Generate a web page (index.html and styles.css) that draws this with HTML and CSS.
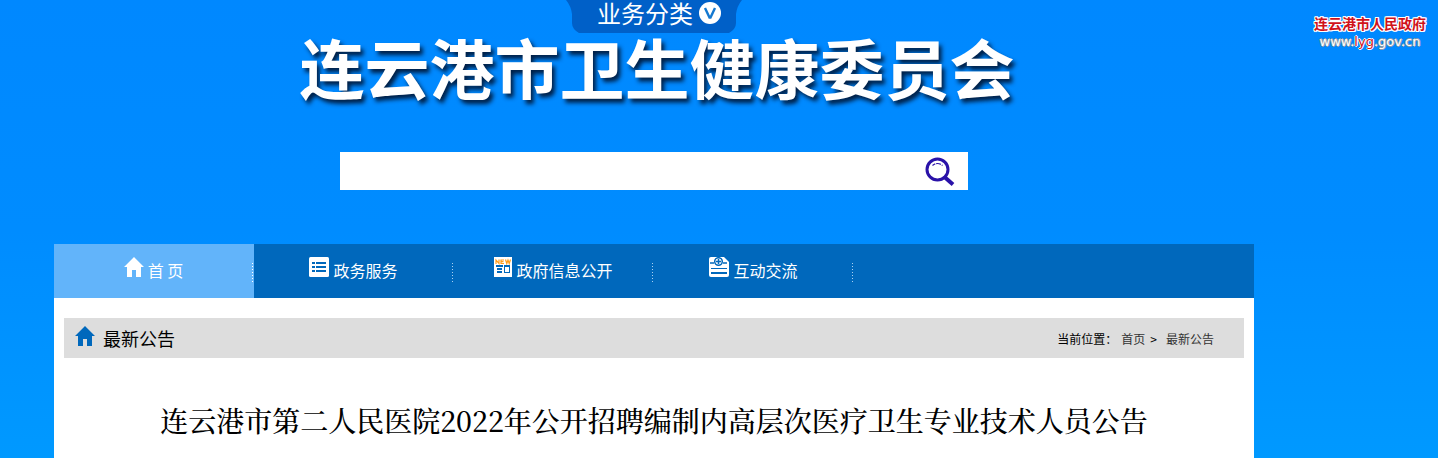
FILE: index.html
```html
<!DOCTYPE html>
<html lang="zh-CN">
<head>
<meta charset="utf-8">
<title>连云港市卫生健康委员会</title>
<link rel="stylesheet" href="styles.css">
</head>
<body>
<div class="page">
  <div class="main">
    <header class="header">
      <button class="category" type="button">
        <svg class="category-shape" viewBox="0 0 176 33" preserveAspectRatio="none" aria-hidden="true"><path d="M0 0H176Q171 6 170 14V23Q170 29 163 33H13Q6 29 6 23V14Q5 6 0 0Z" fill="#0060c8"/></svg>
        <span>业务分类</span>
        <svg class="category-icon" viewBox="0 0 22 22" aria-hidden="true"><circle cx="11" cy="11" r="11" fill="#fff"/><path d="M6 6L10.500 15.500H11.500L16 6" fill="none" stroke="#1478d0" stroke-width="2.400"/></svg>
      </button>
      <h1 class="site-name">连云港市卫生健康委员会</h1>
      <form class="search">
        <input class="search-input" type="text" aria-label="搜索">
        <button class="search-button" type="button" aria-label="提交搜索">
          <svg viewBox="0 0 30 30" aria-hidden="true"><circle cx="12.500" cy="13.500" r="10.500" fill="none" stroke="#2a12a8" stroke-width="3"/><path d="M7.500 9.500Q12.500 5.500 17.500 9.500" fill="none" stroke="#2a12a8" stroke-width="1.200" stroke-dasharray="3 1 5 1"/><path d="M19.500 21L28 28.500" stroke="#2a12a8" stroke-width="4"/></svg>
        </button>
      </form>
    </header>
    <nav class="nav">
      <a class="nav-item active" href="#">
        <svg viewBox="0 0 20 20" aria-hidden="true"><path d="M10 0L20 10H17V20H12V13H8V20H3V10H0Z" fill="#fff"/></svg>
        <span>首 页</span>
      </a>
      <a class="nav-item" href="#">
        <svg viewBox="0 0 20 20" aria-hidden="true"><rect width="20" height="20" rx="1.500" fill="#fff"/><path d="M3 6H6M7 6H17M3 10H6M7 10H17M3 14H6M7 14H17" stroke="#0068bc" stroke-width="2"/></svg>
        <span>政务服务</span>
      </a>
      <a class="nav-item" href="#">
        <svg class="news" viewBox="0 0 18 20" aria-hidden="true"><path d="M0 0H18V20H0Z" fill="#fff"/><path d="M2 7V3L5 6.500V2.500M10 3H7V6.500H10M7 4.700H9.500M11.500 2.500L12.800 6.500L14 3L15.200 6.500L16.500 2.500" fill="none" stroke="#ff9c1a" stroke-width="1.200"/><path d="M2 9H9M3 12H8M3 15H8" stroke="#0068bc" stroke-width="1.800"/><path d="M10 8H16V16H10Z" fill="#0068bc"/><path d="M11 10H15V15H11Z" fill="#fff"/></svg>
        <span>政府信息公开</span>
      </a>
      <a class="nav-item" href="#">
        <svg viewBox="0 0 20 20" aria-hidden="true"><path d="M2 0H15L20 5V18Q20 20 18 20H2Q0 20 0 18V2Q0 0 2 0Z" fill="#fff"/><path d="M1 6H5M14 6H18" stroke="#0068bc" stroke-width="1.500"/><path d="M2 11H18V12H2ZM2 15H18V17H2Z" fill="#0068bc"/><circle cx="9.500" cy="4.500" r="3.800" fill="#fff" stroke="#0068bc" stroke-width="1.500"/><path d="M9.500 2V7M7 4.500H12" stroke="#0068bc" stroke-width="1.500"/></svg>
        <span>互动交流</span>
      </a>
    </nav>
    <main class="content">
      <div class="bar">
        <h2 class="bar-title">
          <svg viewBox="0 0 20 20" aria-hidden="true"><path d="M10 0L20 10H17V20H12V13H8V20H3V10H0Z" fill="#0068bc"/></svg>
          <span>最新公告</span>
        </h2>
        <div class="crumbs"><span>当前位置：</span><a href="#">首页</a><span class="sep">&gt;</span><a href="#">最新公告</a></div>
      </div>
      <h1 class="article-title">连云港市第二人民医院2022年公开招聘编制内高层次医疗卫生专业技术人员公告</h1>
    </main>
  </div>
  <aside class="side">
    <a class="gov" href="#">
      <span class="gov-name">连云港市人民政府</span>
      <span class="gov-url">www.<span class="gov-key">lyg</span>.gov.cn</span>
    </a>
  </aside>
</div>
</body>
</html>
```
FILE: styles.css
```css
* { box-sizing: border-box; }
body {
  margin: 0;
  min-height: 100vh;
  background: linear-gradient(#0088ff, #008cff 50%, #0099ff);
  font-family: "Noto Sans CJK SC", sans-serif;
  color: #000;
}
a { color: inherit; text-decoration: none; }
svg { display: block; flex: none; }
h1, h2 { margin: 0; }
button { border: 0; padding: 0; background: none; font: inherit; cursor: pointer; }

.page {
  display: grid;
  grid-template-columns: minmax(0, 1fr) 130px;
  min-height: 100vh;
}
.main {
  display: flex;
  flex-direction: column;
  width: 100%;
  max-width: 1200px;
  margin: 0 auto;
}
.header {
  display: flex;
  flex-direction: column;
  align-items: center;
  padding-bottom: 54px;
}
.category {
  position: relative;
  display: flex;
  align-items: center;
  justify-content: center;
  gap: 6px;
  width: 176px;
  height: 33px;
  padding: 0 0 8px 10px;
  color: #fff;
  font-size: 24px;
  line-height: 24px;
}
.category-shape { position: absolute; inset: 0; width: 100%; height: 100%; }
.category span { position: relative; }
.category-icon { position: relative; width: 22px; height: 22px; }
.site-name {
  margin-bottom: 53px;
  padding-left: 6px;
  color: #fff;
  font-size: 65px;
  font-weight: 700;
  line-height: 66px;
  white-space: nowrap;
  text-shadow: 3px 4px 4px rgba(0, 20, 50, 0.9);
}
.search {
  display: flex;
  align-items: center;
  width: 100%;
  max-width: 628px;
  height: 38px;
  padding-right: 13px;
  background: #fff;
}
.search-input {
  flex: 1;
  min-width: 0;
  height: 100%;
  border: 0;
  padding: 0 12px;
  background: transparent;
  font-size: 16px;
  outline: 0;
}
.search-button svg { width: 30px; height: 30px; }

.nav { display: flex; height: 54px; background: #0068bc; }
.nav-item {
  display: flex;
  flex: 0 1 200px;
  justify-content: center;
  gap: 4px;
  padding: 11px 1px 0 0;
  color: #fff;
  font-size: 16px;
  line-height: 30px;
  background: repeating-linear-gradient(#a9d0f0 0 1px, transparent 1px 3px) right 1px top 19px / 1px 20px no-repeat;
}
.nav-item.active {
  background-color: #62b4fa;
  background-image: repeating-linear-gradient(#fff 0 1px, transparent 1px 3px);
}
.nav-item svg { width: 20px; height: 20px; margin-top: 2px; }
.nav-item .news { width: 18px; }

.content { flex: 1; padding: 20px 10px 0; background: #fff; }
.bar {
  display: flex;
  align-items: center;
  justify-content: space-between;
  height: 40px;
  padding: 0 30px 0 11px;
  background: #ddd;
}
.bar-title {
  display: flex;
  align-items: center;
  gap: 8px;
  font-size: 18px;
  font-weight: 400;
}
.bar-title svg { width: 20px; height: 20px; margin-bottom: 4px; }
.crumbs { display: flex; font-size: 12px; }
.crumbs a { color: #333; }
.crumbs a:first-of-type { margin-left: 4px; }
.sep { margin: 0 9px 0 5px; }
.article-title {
  margin-top: 42px;
  font-family: "Noto Serif CJK SC", "Source Han Serif SC", SimSun, serif;
  font-size: 28px;
  font-weight: 500;
  line-height: 40px;
  text-align: center;
}

.side { display: flex; justify-content: flex-end; padding: 13px 12px 0 0; }
.gov { display: flex; flex-direction: column; align-items: center; white-space: nowrap; }
.gov-name {
  color: #d0121b;
  font-size: 14px;
  font-weight: 700;
  line-height: 20px;
  text-shadow: 1px 0 #fff, -1px 0 #fff, 0 1px #fff, 0 -1px #fff, 1px 1px #fff, -1px -1px #fff, 1px -1px #fff, -1px 1px #fff;
}
.gov-url {
  color: #fff;
  font-family: "DejaVu Sans", sans-serif;
  font-size: 13px;
  line-height: 18px;
  text-shadow: 1px 0 #8c9aa8, -1px 0 #8c9aa8, 0 1px #8c9aa8, 0 -1px #8c9aa8;
}
.gov-key { color: #d0121b; text-shadow: 1px 0 #fff, -1px 0 #fff, 0 1px #fff, 0 -1px #fff; }
```
